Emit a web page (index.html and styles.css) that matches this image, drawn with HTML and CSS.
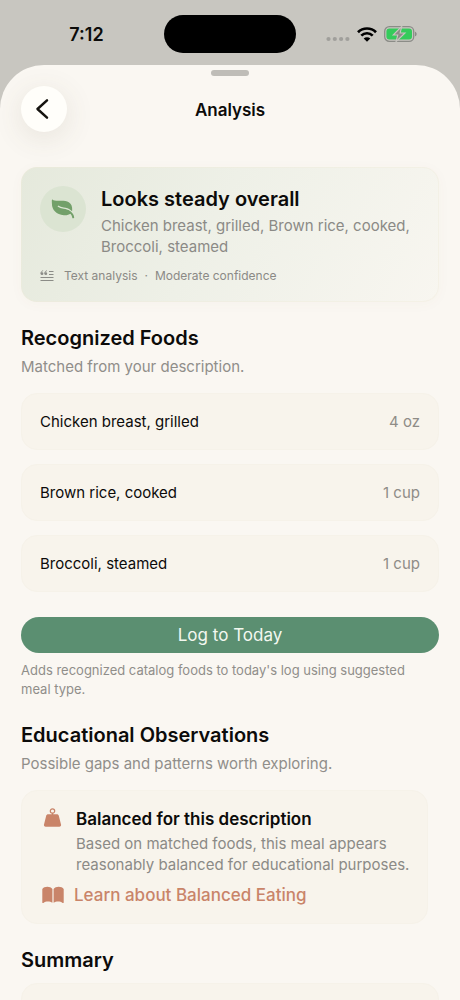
FILE: index.html
```html
<!DOCTYPE html>
<html lang="en">
<head>
<meta charset="utf-8">
<meta name="viewport" content="width=device-width, initial-scale=1">
<title>Analysis</title>
<link rel="stylesheet" href="styles.css">
</head>
<body>
<div class="screen">
  <div class="status">
    <time class="clock">7:12</time>
    <div class="island"></div>
    <div class="indicators">
      <svg width="24" height="6" viewBox="0 0 24 6" fill="#a09f9b" aria-hidden="true"><circle cx="2.5" cy="3" r="2.1"/><circle cx="8.8" cy="3" r="2.1"/><circle cx="15.1" cy="3" r="2.1"/><circle cx="21.4" cy="3" r="2.1"/></svg>
      <svg width="20" height="15" viewBox="0 0 20 15" fill="none" stroke="#000" stroke-width="2.7" aria-hidden="true"><path d="M1 5.2a12.8 12.8 0 0 1 18 0"/><path d="M4.3 8.6a8.1 8.1 0 0 1 11.4 0"/><path d="M10 14.8 6.7 11.500a4.700 4.700 0 0 1 6.600 0z" fill="#000" stroke="none"/></svg>
      <svg width="34" height="16" viewBox="0 0 34 16" aria-hidden="true"><rect x=".7" y=".7" width="29" height="14.6" rx="4.6" fill="none" stroke="#8b8c87" stroke-width="1.3"/><rect x="2.4" y="2.4" width="25.6" height="11.2" rx="3" fill="#34cb5b"/><path d="M31 5.700c2.200.6 2.200 4 0 4.600z" fill="#8b8c87"/><path d="M17.800.3 9.200 9h4.600l-1.800 6.700L21 7h-4.900z" fill="#8b8c87" stroke="#c8c6c0" stroke-width="1.100"/></svg>
    </div>
  </div>
  <main class="sheet">
    <div class="grabber"></div>
    <header class="nav">
      <button class="back" type="button" aria-label="Back"><svg width="14" height="22" viewBox="0 0 14 22" fill="none" stroke="#15130f" stroke-width="2.5" stroke-linecap="round" stroke-linejoin="round" aria-hidden="true"><path d="M12 2.300 2.500 11l9.500 8.700"/></svg></button>
      <h1 class="title">Analysis</h1>
    </header>

    <section class="card hero">
      <div class="hero-main">
        <div class="badge"><svg width="24" height="20" viewBox="0 0 24 20" aria-hidden="true"><path d="M1.500.4C2.600 1.600 5 1.900 8 1.800c4-.2 7.300 0 9.800 1.500 2.700 1.700 3.600 4.400 3.400 8.200l-1.700 3.100c-1.600 1.300-4 2-6.700 1.700C5.500 15.500.900 11.200.9 4.500.9 2.500.5.200 1.500.4z" fill="#73a06a"/><path d="M7.300 7.300c2.300 1.900 4.500 1.600 7.200 2 3 .5 5 2 6.800 4.300" fill="none" stroke="#dbe4d2" stroke-width="1.300" stroke-linecap="round"/><path d="M17 12.200c3 1.400 4.800 3.300 5.200 6.100" fill="none" stroke="#73a06a" stroke-width="2" stroke-linecap="round"/></svg></div>
        <div class="hero-text">
          <h2 class="heading">Looks steady overall</h2>
          <p class="body">Chicken breast, grilled, Brown rice, cooked, Broccoli, steamed</p>
        </div>
      </div>
      <div class="meta">
        <svg width="14" height="12" viewBox="0 0 14 12" aria-hidden="true"><g fill="none" stroke="#8b8c87"><path d="M9 1.500h4.500M9 4.500h4.500M.5 7.500h13M.5 10.500h13"/></g><g fill="#8b8c87"><circle cx="2" cy="3.700" r="1.400"/><circle cx="5.800" cy="3.700" r="1.400"/></g><path d="M1 3.700C.9 2 1.700 1 3.100.7M4.800 3.700C4.700 2 5.500 1 6.900.7" fill="none" stroke="#8b8c87" stroke-width=".9"/></svg>
        <span>Text analysis</span><span>·</span><span>Moderate confidence</span>
      </div>
    </section>

    <section class="section">
      <h2 class="heading">Recognized Foods</h2>
      <p class="sub">Matched from your description.</p>
      <ul class="foods">
        <li class="card food"><span>Chicken breast, grilled</span><span class="amount">4 oz</span></li>
        <li class="card food"><span>Brown rice, cooked</span><span class="amount">1 cup</span></li>
        <li class="card food"><span>Broccoli, steamed</span><span class="amount">1 cup</span></li>
      </ul>
      <button class="log" type="button">Log to Today</button>
      <p class="note">Adds recognized catalog foods to today's log using suggested meal type.</p>
    </section>

    <section class="section">
      <h2 class="heading">Educational Observations</h2>
      <p class="sub">Possible gaps and patterns worth exploring.</p>
      <article class="card observation">
        <div class="obs-main">
          <svg width="22" height="22" viewBox="0 0 22 22" aria-hidden="true"><circle cx="12.500" cy="4" r="2.200" fill="none" stroke="#c98469" stroke-width="1.200"/><path d="M11.800 6h1.400v2h-1.400z" fill="#c98469"/><path d="M8.300 7.300h8.400c1.200 0 1.900.6 2.200 1.700l2.100 8.600c.3 1.300-.4 2.200-1.700 2.200H5.700c-1.300 0-2-.9-1.700-2.200L6.100 9c.3-1.100 1-1.700 2.200-1.700z" fill="#c98469"/></svg>
          <div>
            <h3 class="obs-title">Balanced for this description</h3>
            <p class="body">Based on matched foods, this meal appears reasonably balanced for educational purposes.</p>
          </div>
        </div>
        <a class="learn" href="#balanced-eating"><svg width="24" height="18" viewBox="-2 0 24 18" fill="#c98469" aria-hidden="true"><path d="M10.400 3v13.800c-2.500-1.600-6.500-1.700-9 .1-.6.4-1.100.1-1.100-.5V3C2 .2 8.300-.1 10.400 3zM11.600 3v13.800c2.500-1.600 6.500-1.700 9 .1.600.4 1.100.1 1.100-.5V3C20 .2 13.700-.1 11.600 3z"/></svg>Learn about Balanced Eating</a>
      </article>
    </section>

    <section class="section">
      <h2 class="heading">Summary</h2>
      <div class="card summary"></div>
    </section>
  </main>
</div>
</body>
</html>
```
FILE: styles.css
```css
* { box-sizing: border-box; }
body {
  margin: 0;
  background: #c8c6c0;
  color: #0c0b0a;
  font-family: Inter, "Liberation Sans", sans-serif;
}
h1, h2, h3, p, ul { margin: 0; padding: 0; }
button { border: 0; font-family: inherit; cursor: pointer; }
svg { display: block; flex: none; }

.screen {
  height: 100vh;
  overflow: hidden;
  display: flex;
  flex-direction: column;
}
.status {
  flex: none;
  display: grid;
  grid-template-columns: 1fr 132px 1fr;
  align-items: center;
  padding: 15px 0 12px;
}
.clock {
  justify-self: center;
  padding: 1px 0 0 9px;
  font-size: 18px;
  line-height: 24px;
  font-weight: 600;
}
.island { height: 38px; border-radius: 19px; background: #000; }
.indicators {
  display: flex;
  align-items: center;
  justify-content: flex-end;
  gap: 7px;
  padding-right: 42px;
}
.indicators svg:first-child { align-self: flex-end; }

.sheet {
  flex: 1;
  min-height: 0;
  overflow: hidden;
  padding: 5px 21px 0;
  border-radius: 44px 44px 0 0;
  background: #faf7f2;
}
.grabber {
  width: 38px;
  height: 6px;
  margin: 0 auto;
  border-radius: 3px;
  background: #bfbdb8;
}
.nav {
  display: grid;
  grid-template-columns: 46px 1fr 46px;
  align-items: center;
  margin: 10px 0 35px;
}
.back {
  width: 46px;
  height: 46px;
  padding: 0 4px 0 0;
  display: grid;
  place-items: center;
  border-radius: 50%;
  background: #fffefa;
  box-shadow: 0 6px 30px rgba(90, 80, 60, 0.12);
}
.title {
  padding-top: 1px;
  text-align: center;
  font-size: 17px;
  line-height: 24px;
  font-weight: 600;
}

.card {
  border: 1px solid #f6f2e9;
  border-radius: 16px;
  background: #f8f4ec;
}
.hero {
  padding: 17px 18px 16px;
  border-color: rgba(240, 234, 218, 0.4);
  background: linear-gradient(118deg, #e5e9dc 0%, #eef0e7 45%, #f8f6f0 100%) border-box;
  box-shadow: 0 2px 14px rgba(120, 100, 60, 0.03);
}
.hero-main { display: flex; gap: 15px; }
.badge {
  flex: none;
  width: 46px;
  height: 46px;
  margin-top: 1px;
  display: grid;
  place-items: center;
  border-radius: 50%;
  background: #dbe4d2;
}
.heading { font-size: 20px; line-height: 28px; font-weight: 600; }
.body {
  margin-top: 2px;
  font-size: 15px;
  line-height: 21px;
  color: #8b8a86;
}
.meta {
  display: flex;
  align-items: center;
  gap: 7px;
  margin-top: 10px;
  font-size: 12px;
  line-height: 18px;
  color: #8b8a86;
}
.meta svg { margin-right: 3px; }

.section { margin-top: 22px; }
.sub {
  margin: 4px 0 15px;
  font-size: 15px;
  line-height: 22px;
  color: #908e8a;
}
.foods { display: grid; gap: 14px; list-style: none; }
.food {
  display: flex;
  justify-content: space-between;
  padding: 17px 18px;
  font-size: 15px;
  line-height: 21px;
}
.amount { color: #8f8c87; }
.log {
  display: block;
  width: 100%;
  margin-top: 25px;
  padding: 6px 16px;
  border-radius: 18px;
  background: #5b8f71;
  color: #f3f8f0;
  font-size: 17px;
  line-height: 24px;
}
.note {
  margin-top: 8px;
  padding-right: 16px;
  font-size: 13px;
  line-height: 19px;
  color: #908e8a;
}

.observation { margin-right: 11px; padding: 16px 10px 16px 18px; }
.obs-main { display: flex; gap: 14px; }
.obs-title { font-size: 17px; line-height: 24px; font-weight: 600; }
.learn {
  display: flex;
  align-items: center;
  gap: 10px;
  margin-top: 8px;
  color: #c98469;
  font-size: 17px;
  line-height: 24px;
  font-weight: 500;
  text-decoration: none;
}
.summary { min-height: 120px; margin-top: 9px; }
```
